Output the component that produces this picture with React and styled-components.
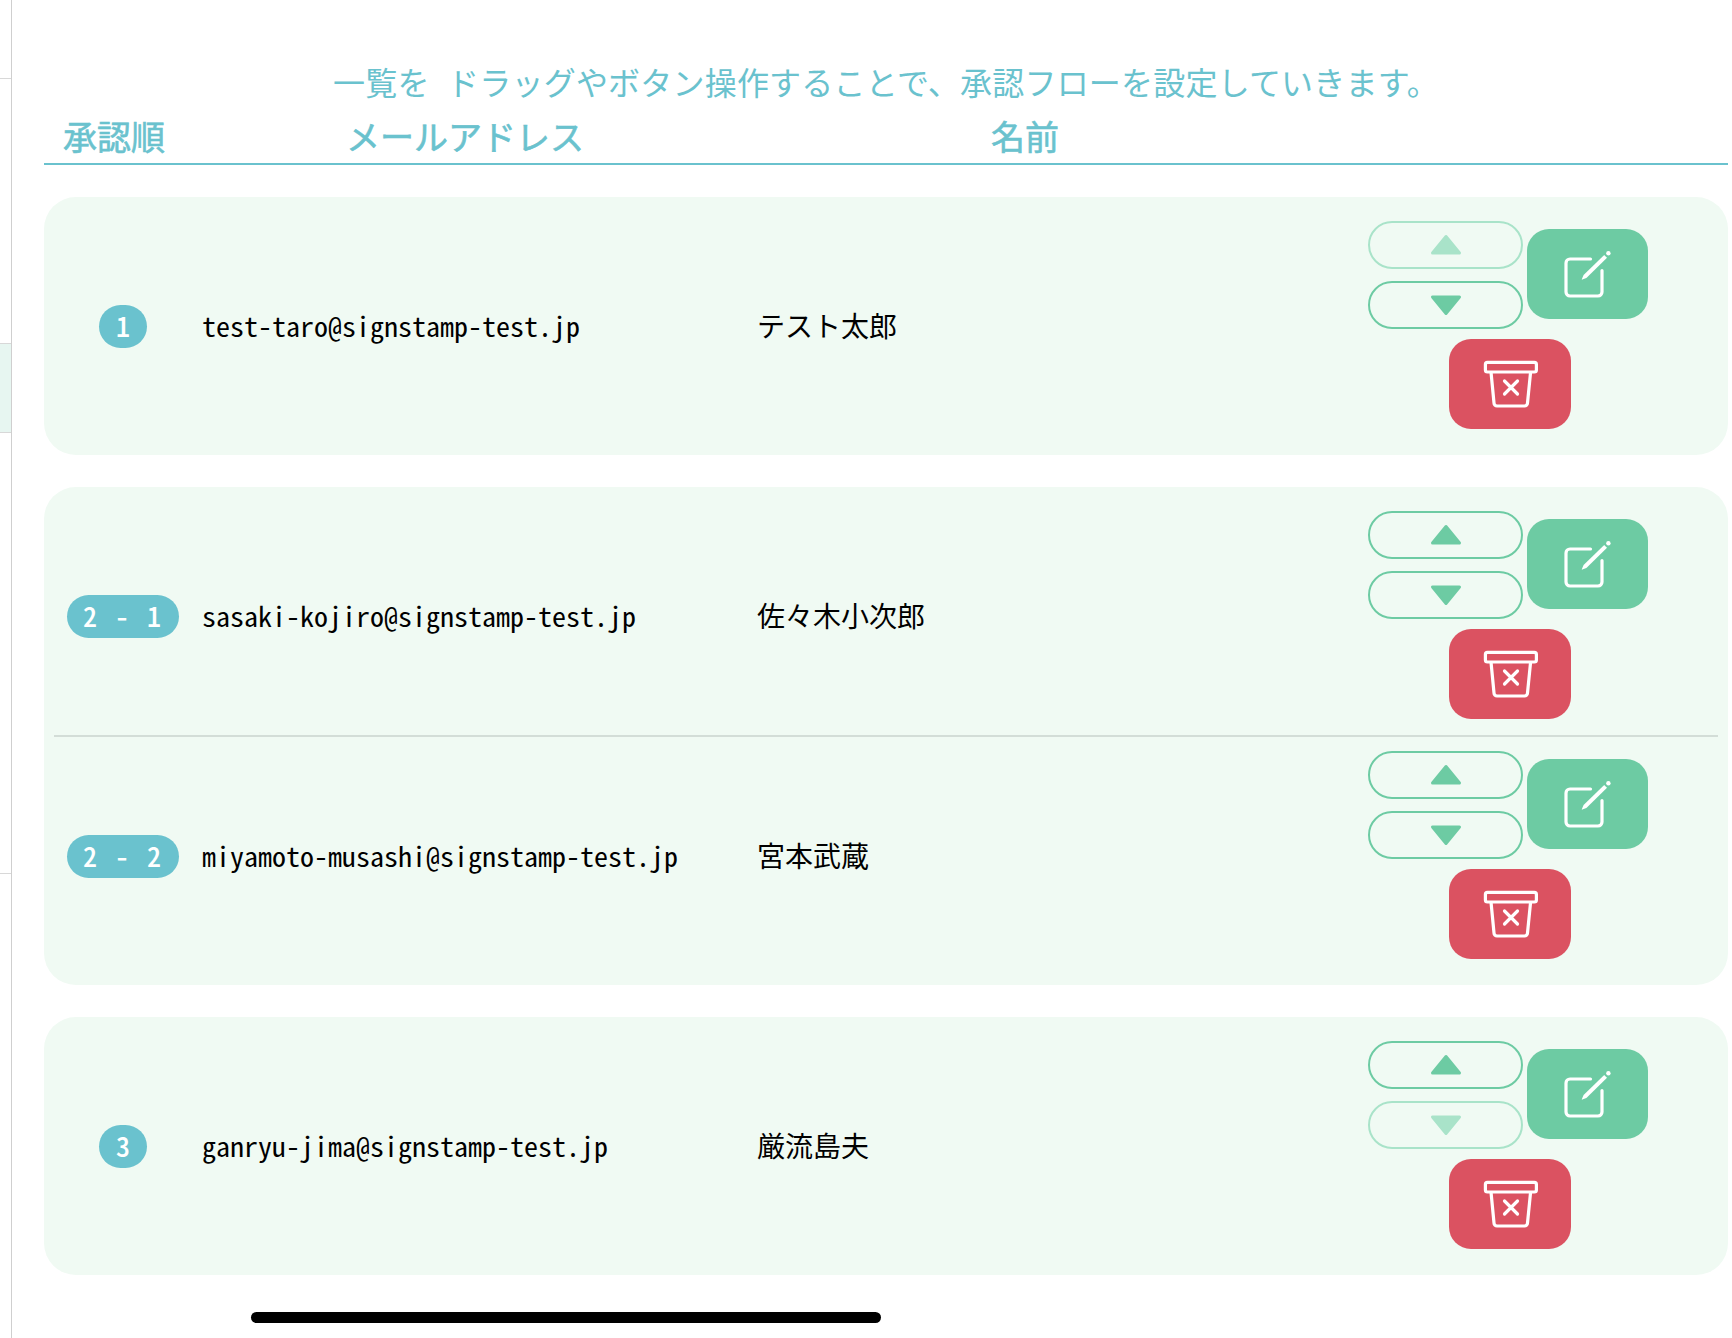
import styled, { createGlobalStyle } from "styled-components";

const TEAL = "#6ac2ce";
const GREEN = "#6dcba3";
const GREEN_PALE = "#a9e3c9";
const RED = "#db5261";

const GlobalStyle = createGlobalStyle`
  html, body {
    margin: 0;
    padding: 0;
    background: #fff;
    font-family: "Noto Sans CJK JP", "Liberation Sans", sans-serif;
  }
  * {
    box-sizing: border-box;
  }
`;

const groups = [
  [{ order: "1", email: "test-taro@signstamp-test.jp", name: "テスト太郎", upOff: true }],
  [
    { order: "2 - 1", email: "sasaki-kojiro@signstamp-test.jp", name: "佐々木小次郎" },
    { order: "2 - 2", email: "miyamoto-musashi@signstamp-test.jp", name: "宮本武蔵" },
  ],
  [{ order: "3", email: "ganryu-jima@signstamp-test.jp", name: "厳流島夫", downOff: true }],
];

const ArrowIcon = ({ down }) => (
  <svg width="32" height="22" viewBox="0 0 32 22">
    <path
      d={down ? "M2.5 3 H29.5 L16 19.5 Z" : "M16 2.5 L29.5 19 H2.5 Z"}
      fill="currentColor"
      stroke="currentColor"
      strokeWidth="3"
      strokeLinejoin="round"
    />
  </svg>
);

const EditIcon = () => (
  <svg width="48" height="48" viewBox="0 0 48 48" fill="none">
    <path
      d="M26.5 9 H6 a4 4 0 0 0 -4 4 V42 a4 4 0 0 0 4 4 H34 a4 4 0 0 0 4 -4 V20.5"
      stroke="#fff"
      strokeWidth="3.2"
      strokeLinecap="round"
    />
    <path d="M17.6 29.8 L19.6 25 L40.2 5 L43 7.8 L22.4 28 Z" fill="#fff" />
    <circle cx="44.4" cy="3.2" r="2.2" fill="#fff" />
  </svg>
);

const TrashIcon = () => (
  <svg width="56" height="48" viewBox="0 0 56 48" fill="none" stroke="#fff" strokeWidth="3.2">
    <rect x="2.4" y="2.4" width="51" height="9.6" rx="2" />
    <path d="M8 12 L11 43 a3 3 0 0 0 3 3 H41.5 a3 3 0 0 0 3 -3 L47.6 12" strokeLinejoin="round" />
    <path d="M21.5 21 L34.5 34 M34.5 21 L21.5 34" strokeLinecap="round" />
  </svg>
);

const App = () => {
  return (
    <Page>
      <GlobalStyle />
      <SideRail>
        <SideItem $height={79} />
        <SideItem $height={265} />
        <SideItem $height={89} $active />
        <SideItem $height={441} />
      </SideRail>

      <Main>
        <Title>一覧を ドラッグやボタン操作することで、承認フローを設定していきます。</Title>
        <HeadRow>
          <span>承認順</span>
          <span>メールアドレス</span>
          <span>名前</span>
        </HeadRow>

        <CardList>
          {groups.map((rows) => (
            <Card key={rows[0].email}>
              {rows.map((row, i) => (
                <Row key={row.email} $first={i === 0} $last={i === rows.length - 1}>
                  <BadgeCell>
                    <Badge $wide={row.order.length > 1}>{row.order}</Badge>
                  </BadgeCell>
                  <Email>{row.email}</Email>
                  <Name>{row.name}</Name>
                  <Actions>
                    <ActionTop>
                      <Arrows>
                        <ArrowButton $off={row.upOff}>
                          <ArrowIcon />
                        </ArrowButton>
                        <ArrowButton $off={row.downOff}>
                          <ArrowIcon down />
                        </ArrowButton>
                      </Arrows>
                      <EditButton>
                        <EditIcon />
                      </EditButton>
                    </ActionTop>
                    <DeleteButton>
                      <TrashIcon />
                    </DeleteButton>
                  </Actions>
                </Row>
              ))}
            </Card>
          ))}
        </CardList>
      </Main>

      <HomeIndicator />
    </Page>
  );
};

export default App;

const Page = styled.div`
  position: relative;
  display: flex;
  width: 1732px;
  height: 1338px;
  overflow: hidden;
`;

const SideRail = styled.div`
  flex: 0 0 12px;
  border-right: 1px solid #cfcfcf;
`;

const SideItem = styled.div`
  height: ${({ $height }) => $height}px;
  border-bottom: 1px solid #d8d8d8;
  background: ${({ $active }) => ($active ? "#e7f6f1" : "transparent")};
`;

const Main = styled.div`
  flex: 1;
  min-width: 0;
  padding: 61px 4px 0 32px;
`;

const Title = styled.div`
  font-size: 32px;
  line-height: 40px;
  letter-spacing: 0.2px;
  word-spacing: 10px;
  text-align: center;
  color: ${TEAL};
  white-space: nowrap;
`;

const HeadRow = styled.div`
  display: grid;
  grid-template-columns: 283px 645px 1fr;
  padding: 13px 0 5px 19px;
  border-bottom: 2px solid ${TEAL};
  font-size: 34px;
  line-height: 44px;
  -webkit-text-stroke: 0.6px ${TEAL};
  color: ${TEAL};
`;

const CardList = styled.div`
  display: flex;
  flex-direction: column;
  gap: 32px;
  margin-top: 32px;
`;

const Card = styled.div`
  background: #f0faf3;
  border-radius: 32px;
`;

const Row = styled.div`
  display: grid;
  grid-template-columns: 148px 555px 611px 280px;
  align-items: center;
  margin: 0 10px;
  padding-top: ${({ $first }) => ($first ? 24 : 14)}px;
  padding-bottom: ${({ $last }) => ($last ? 26 : 16)}px;
  border-bottom: ${({ $last }) => ($last ? "none" : "2px solid #d3ddd7")};
`;

const BadgeCell = styled.div`
  display: flex;
  justify-content: center;
  padding-right: 10px;
`;

const Badge = styled.div`
  width: ${({ $wide }) => ($wide ? 112 : 48)}px;
  height: 43px;
  margin-top: 3px;
  border-radius: 22px;
  background: ${TEAL};
  color: #fff;
  font-size: 28px;
  font-weight: 500;
  line-height: 41px;
  letter-spacing: ${({ $wide }) => ($wide ? 2 : 0)}px;
  font-feature-settings: "hwid";
  text-align: center;
  white-space: pre;
`;

const Email = styled.div`
  font-size: 28px;
  line-height: 40px;
  font-feature-settings: "hwid";
  color: #000;
  white-space: nowrap;
`;

const Name = styled.div`
  font-size: 28px;
  line-height: 40px;
  color: #000;
`;

const Actions = styled.div`
  display: flex;
  flex-direction: column;
  align-items: center;
  gap: 10px;
`;

const ActionTop = styled.div`
  display: flex;
  align-items: flex-start;
  gap: 4px;
`;

const Arrows = styled.div`
  display: flex;
  flex-direction: column;
  gap: 12px;
`;

const ArrowButton = styled.button`
  display: flex;
  align-items: center;
  justify-content: center;
  width: 155px;
  height: 48px;
  padding: 0;
  border: 2px solid ${({ $off }) => ($off ? GREEN_PALE : GREEN)};
  border-radius: 24px;
  background: transparent;
  color: ${({ $off }) => ($off ? GREEN_PALE : GREEN)};
`;

const EditButton = styled.button`
  display: flex;
  align-items: center;
  justify-content: center;
  width: 121px;
  height: 90px;
  margin-top: 8px;
  padding: 0;
  border: none;
  border-radius: 22px;
  background: ${GREEN};
`;

const DeleteButton = styled.button`
  display: flex;
  align-items: center;
  justify-content: center;
  width: 122px;
  height: 90px;
  margin-left: 4px;
  padding: 0 0 0 2px;
  border: none;
  border-radius: 22px;
  background: ${RED};
`;

const HomeIndicator = styled.div`
  position: absolute;
  left: 251px;
  top: 1312px;
  width: 630px;
  height: 11px;
  border-radius: 6px;
  background: #000;
`;
